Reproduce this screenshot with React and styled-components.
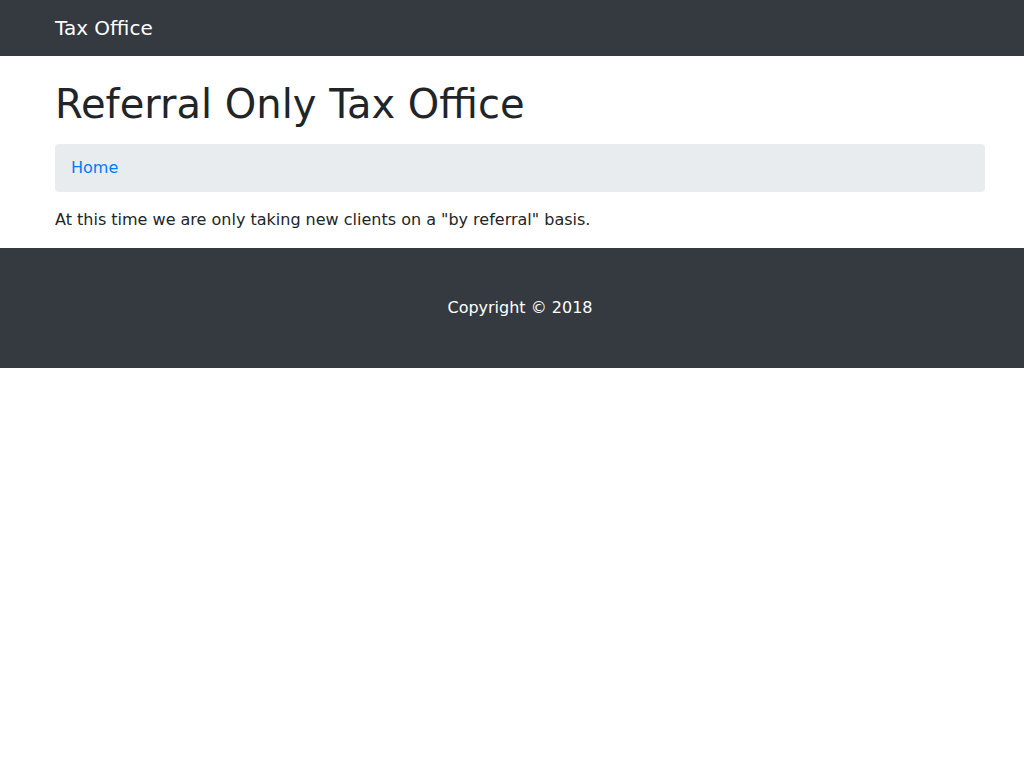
import React from "react";
import styled, { createGlobalStyle } from "styled-components";

const Global = createGlobalStyle`
  * { box-sizing: border-box; }
  html, body { margin: 0; padding: 0; background: #fff; }
  body {
    font-family: "DejaVu Sans", sans-serif;
    font-size: 16px;
    line-height: 1.5;
    color: #212529;
  }
`;

const Container = styled.div`
  width: 960px;
  margin-left: 40px;
  padding: 0 15px;
`;

const Navbar = styled.nav`
  background: #343a40;
  padding: 8px 0;
`;

const Brand = styled.a`
  display: inline-block;
  padding: 5px 0;
  font-size: 20px;
  line-height: 30px;
  color: #fff;
  text-decoration: none;
`;

const Title = styled.h1`
  margin: 24px 0 16px;
  font-size: 40px;
  font-weight: 500;
  line-height: 1.2;
  color: #212529;
`;

const Breadcrumb = styled.ol`
  display: flex;
  list-style: none;
  margin: 0 0 16px;
  padding: 12px 16px;
  background: #e9ecef;
  border-radius: 4px;
`;

const Crumb = styled.li`
  a {
    color: #007bff;
    text-decoration: none;
  }
`;

const Text = styled.p`
  margin: 0 0 16px;
`;

const Footer = styled.footer`
  background: #343a40;
  padding: 48px 0;
`;

const Copy = styled.p`
  margin: 0;
  text-align: center;
  color: #fff;
`;

export default function App() {
  return (
    <>
      <Global />
      <Navbar>
        <Container>
          <Brand href="#">Tax Office</Brand>
        </Container>
      </Navbar>
      <Container>
        <Title>Referral Only Tax Office</Title>
        <Breadcrumb>
          <Crumb>
            <a href="#">Home</a>
          </Crumb>
        </Breadcrumb>
        <Text>At this time we are only taking new clients on a "by referral" basis.</Text>
      </Container>
      <Footer>
        <Container>
          <Copy>Copyright © 2018</Copy>
        </Container>
      </Footer>
    </>
  );
}
